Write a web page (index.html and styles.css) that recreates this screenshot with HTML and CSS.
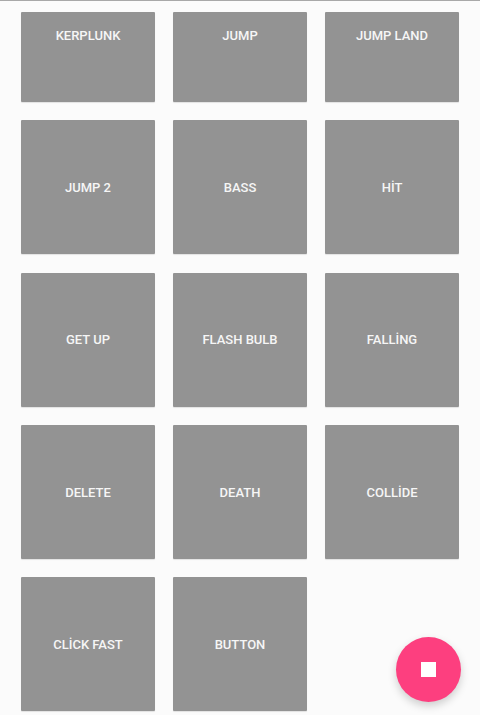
FILE: index.html
```html
<!DOCTYPE html>
<html lang="tr">
<head>
    <meta charset="UTF-8">
    <meta name="viewport" content="width=device-width, initial-scale=1.0">
    <title>Sounds</title>
    <link rel="stylesheet" href="styles.css">
</head>
<body>
    <div class="screen">
        <div class="grid">
            <button class="sound first">KERPLUNK</button>
            <button class="sound first">JUMP</button>
            <button class="sound first">JUMP LAND</button>
            <button class="sound">JUMP 2</button>
            <button class="sound">BASS</button>
            <button class="sound">HİT</button>
            <button class="sound">GET UP</button>
            <button class="sound">FLASH BULB</button>
            <button class="sound">FALLİNG</button>
            <button class="sound">DELETE</button>
            <button class="sound">DEATH</button>
            <button class="sound">COLLİDE</button>
            <button class="sound">CLİCK FAST</button>
            <button class="sound">BUTTON</button>
        </div>
        <button class="fab" aria-label="Stop"><span class="stop"></span></button>
    </div>
</body>
</html>
```

FILE: styles.css
```css
html, body {
    margin: 0;
    padding: 0;
}
body {
    font-family: Roboto, "Liberation Sans", sans-serif;
    background-color: #fbfbfb;
}
.screen {
    position: relative;
    width: 480px;
    height: 715px;
    overflow: hidden;
    box-sizing: border-box;
    border-top: 1px solid #a8a8a8;
    background-color: #fbfbfb;
}
.grid {
    display: grid;
    grid-template-columns: repeat(3, 134px);
    grid-auto-rows: 134px;
    grid-template-rows: 90px;
    column-gap: 18px;
    row-gap: 18.25px;
    padding: 11px 21px 0;
}
.sound {
    display: flex;
    align-items: center;
    justify-content: center;
    padding: 0.6px 0 0;
    border: none;
    border-radius: 1px;
    background-color: #939393;
    color: #f6f6f6;
    font-family: inherit;
    font-size: 13px;
    font-weight: 500;
    box-shadow: 0 1px 1px rgba(0, 0, 0, 0.1);
}
/* first row is scrolled under the top edge, label stays centred on the whole card */
.sound.first {
    padding: 0 0 44px;
}
.fab {
    position: absolute;
    right: 19px;
    bottom: 13px;
    display: flex;
    align-items: center;
    justify-content: center;
    width: 65px;
    height: 65px;
    padding: 0;
    border: none;
    border-radius: 50%;
    background-color: #fd3f7f;
    box-shadow: 0 4px 8px rgba(0, 0, 0, 0.18);
}
.stop {
    width: 15px;
    height: 15px;
    background-color: #fff;
}
```
